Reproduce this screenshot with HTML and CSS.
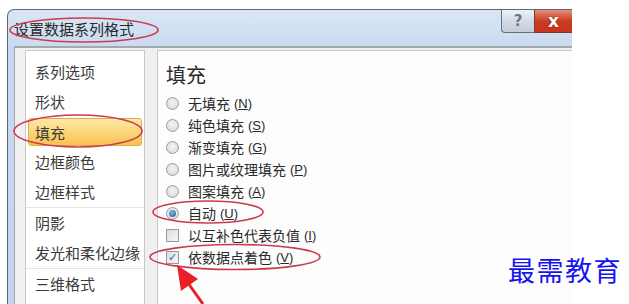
FILE: index.html
```html
<!DOCTYPE html>
<html lang="zh-CN">
<head>
  <meta charset="UTF-8">
  <meta name="viewport" content="width=device-width, initial-scale=1.0">
  <title>设置数据系列格式</title>
  <link rel="stylesheet" href="styles.css">
</head>
<body>
  <div class="window">
    <div class="titlebar">
      <span class="title">设置数据系列格式</span>
      <div class="caption-buttons">
        <span class="btn-help">?</span>
        <span class="btn-close">x</span>
      </div>
    </div>
    <div class="client">
      <ul class="nav">
        <li>系列选项</li>
        <li>形状</li>
        <li class="active">填充</li>
        <li>边框颜色</li>
        <li class="sep">边框样式</li>
        <li>阴影</li>
        <li class="sep">发光和柔化边缘</li>
        <li>三维格式</li>
      </ul>
      <div class="panel">
        <h2>填充</h2>
        <div class="opt"><span class="radio"></span>无填充<span class="key">(<u>N</u>)</span></div>
        <div class="opt"><span class="radio"></span>纯色填充<span class="key">(<u>S</u>)</span></div>
        <div class="opt"><span class="radio"></span>渐变填充<span class="key">(<u>G</u>)</span></div>
        <div class="opt"><span class="radio"></span>图片或纹理填充<span class="key">(<u>P</u>)</span></div>
        <div class="opt"><span class="radio"></span>图案填充<span class="key">(<u>A</u>)</span></div>
        <div class="opt"><span class="radio checked"></span>自动<span class="key">(<u>U</u>)</span></div>
        <div class="opt"><span class="check"></span>以互补色代表负值<span class="key">(<u>I</u>)</span></div>
        <div class="opt"><span class="check checked">&#10003;</span>依数据点着色<span class="key">(<u>V</u>)</span></div>
      </div>
    </div>
  </div>

  <div class="watermark">最需教育</div>

  <!-- red hand-drawn marks over the screenshot -->
  <svg class="marks" width="629" height="304" viewBox="0 0 629 304">
    <g fill="none" stroke="#cc3a50" stroke-width="1.6">
      <ellipse cx="84" cy="30" rx="74" ry="12"/>
      <ellipse cx="78" cy="131" rx="64" ry="16"/>
      <ellipse cx="208" cy="212" rx="55" ry="11"/>
      <ellipse cx="235" cy="257" rx="85" ry="12.5"/>
    </g>
    <line x1="188" y1="283" x2="203" y2="304" stroke="#e8202a" stroke-width="3"/>
    <polygon points="177,265 181,291 198,279" fill="#e8202a"/>
  </svg>
</body>
</html>
```

FILE: styles.css
```css
body {
  margin: 0;
  background-color: #fff;
  font-family: "Noto Sans CJK SC", "Liberation Sans", sans-serif;
  width: 629px;
  height: 304px;
  overflow: hidden;
  position: relative;
}
.window {
  margin: 9px 0 0 7px;
  width: 565px;
  height: 295px;
  box-sizing: border-box;
  background: linear-gradient(#dae6f5, #c8d9ef 40px, #c3d5ec);
  border-top: 1px solid #5f6772;
  border-left: 1px solid #5f6772;
  border-top-left-radius: 7px;
  display: flex;
  flex-direction: column;
  overflow: hidden;
}
.titlebar {
  height: 36px;
  display: flex;
  align-items: center;
  justify-content: space-between;
}
.title {
  padding-left: 6px;
  font-size: 15px;
  color: #2a2a2a;
}
.caption-buttons {
  align-self: flex-start;
  display: flex;
  height: 23px;
}
.btn-help, .btn-close {
  display: flex;
  align-items: center;
  justify-content: center;
  font-family: "DejaVu Sans", sans-serif;
  font-weight: bold;
  font-size: 15px;
}
.btn-help {
  width: 32px;
  background: linear-gradient(#eef2f7, #d3dbe5 50%, #c3cdd9);
  border-left: 1px solid #66707c;
  border-bottom: 1px solid #66707c;
  border-bottom-left-radius: 4px;
  color: #6a7480;
  text-shadow: 0 0 1px #fff;
}
.btn-close {
  width: 37px;
  background: linear-gradient(#e48f7e, #cc3a22 50%, #c8341c);
  border-left: 1px solid #7a3a30;
  border-bottom: 1px solid #7a3a30;
  color: #fff;
  font-size: 17px;
  text-shadow: 0 0 2px #6b1d10;
}
.client {
  flex: 1;
  margin-left: 6px;
  background-color: #f0f0f0;
  border-top: 2px solid #a4a9b0;
  border-left: 1px solid #9fa8b4;
  padding: 2px 0 0 10px;
  display: flex;
  gap: 12px;
}
.nav {
  list-style: none;
  margin: 0;
  padding: 6px 0 0;
  width: 120px;
  box-sizing: border-box;
  background-color: #fff;
  border: 1px solid #c9c9c9;
  border-bottom: none;
}
.nav li {
  height: 30px;
  line-height: 30px;
  padding-left: 9px;
  font-size: 15px;
  color: #3a3a3a;
  white-space: nowrap;
}
.nav li.active {
  height: 28px;
  line-height: 28px;
  margin: 1px 2px;
  padding-left: 6px;
  background: linear-gradient(#fde9a6, #fbd57c 50%, #f8c250);
  border: 1px solid #e2ab4c;
  border-radius: 3px;
  box-sizing: border-box;
}
.nav li.sep {
  border-bottom: 1px solid #e4e4e4;
}
.panel {
  flex: 1;
  background-color: #fdfdfd;
  border: 1px solid #c9c9c9;
  border-right: none;
  border-bottom: none;
  padding: 10px 0 0 8px;
}
.panel h2 {
  margin: 0 0 3px;
  font-size: 20px;
  font-weight: normal;
  line-height: 28px;
  color: #2a2a2a;
}
.opt {
  height: 22px;
  display: flex;
  align-items: center;
  font-size: 14px;
  color: #2a2a2a;
}
.key {
  margin-left: 4px;
  font-size: 13px;
  font-family: "Liberation Sans", sans-serif;
}
.radio {
  width: 11px;
  height: 11px;
  margin: 0 9px 0 0;
  border: 1px solid #9a9b9c;
  border-radius: 50%;
  background: radial-gradient(circle at 50% 40%, #f4f4f4, #d6d6d6);
  box-sizing: content-box;
  display: flex;
  align-items: center;
  justify-content: center;
}
.radio.checked::after {
  content: "";
  width: 7px;
  height: 7px;
  border-radius: 50%;
  background: radial-gradient(circle at 40% 35%, #7fb3e0, #1f5a92);
}
.check {
  width: 11px;
  height: 11px;
  margin: 0 9px 0 0;
  border: 1px solid #9a9b9c;
  background: linear-gradient(135deg, #dcdcdc, #f7f7f7);
  display: flex;
  align-items: center;
  justify-content: center;
  font-family: "DejaVu Sans", sans-serif;
  font-size: 11px;
  font-weight: bold;
  color: #4c5f96;
}
.watermark {
  position: absolute;
  left: 508px;
  top: 256px;
  font-size: 27px;
  line-height: 1;
  letter-spacing: 1.5px;
  color: #1414ee;
}
.marks {
  position: absolute;
  left: 0;
  top: 0;
  pointer-events: none;
}
```
